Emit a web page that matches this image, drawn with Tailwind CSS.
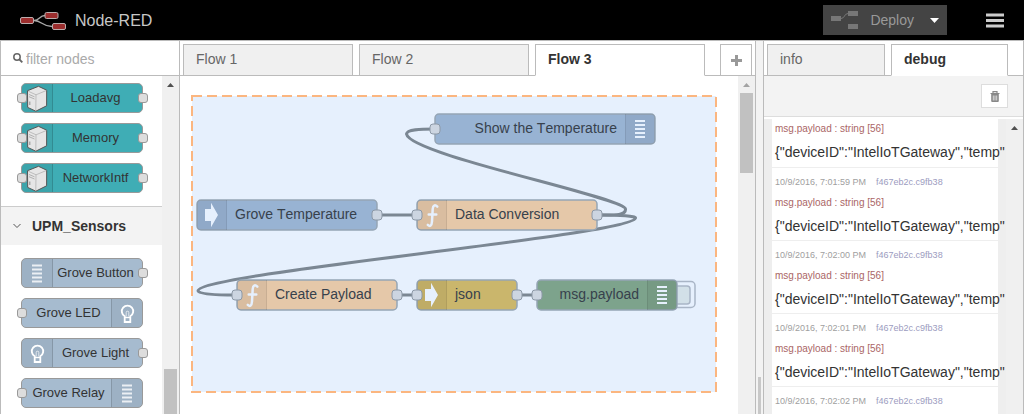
<!DOCTYPE html>
<html lang="en">
<head>
<meta charset="utf-8">
<title>Node-RED</title>
<script src="https://cdn.jsdelivr.net/npm/@tailwindcss/browser@4"></script>
</head>
<body class="flex h-screen flex-col overflow-hidden bg-white font-['Liberation_Sans',Arial,sans-serif] text-sm text-[#333] [font-kerning:none]">

<!-- Shared symbols -->
<svg class="hidden">
  <symbol id="server" viewBox="0 0 30 30">
    <path d="M6.500 7.700 17.500 3.300 25.700 7.200 25.600 22.800 14.800 28.200 6.700 24.400Z" fill="#e6e6e6" stroke="#555" stroke-width="1" stroke-linejoin="round"/>
    <path d="M7.200 8.200 15 11.800 25.200 7.600M15 11.800 14.800 27.500" fill="none" stroke="#aaa" stroke-width=".7"/>
    <path d="M8 11.500l5.500 2.300M8 13.700l5.500 2.300" fill="none" stroke="#999" stroke-width=".7"/>
    <path d="M8.800 18.500v3.500" stroke="#777" stroke-width=".8"/>
  </symbol>
  <symbol id="bars" viewBox="0 0 30 30">
    <path d="M10 7.500h10M10 11.500h10M10 15.500h10M10 19.500h10M10 23.500h10" stroke="currentColor" stroke-width="2"/>
  </symbol>
  <symbol id="bulb" viewBox="0 0 30 30">
    <path d="M12.700 18.200A5.700 5.700 0 1 1 18.300 18.200V24H12.700Z" fill="none" stroke="#fff" stroke-width="1.800"/>
    <path d="M12.500 19.500h6" stroke="#fff" stroke-width="1.400"/>
    <path d="M14.200 18.500v-4a1.300 1.300 0 0 1 2.600 0v4" fill="none" stroke="#fff" stroke-width="1" opacity=".7"/>
  </symbol>
  <symbol id="arrow" viewBox="0 0 30 30">
    <path d="M8 9.500h6V3.200L21 15.500 14 27.800V21.500H8Z" fill="#e6f0fd"/>
  </symbol>
  <symbol id="func" viewBox="0 0 30 30">
    <path d="M20.300 6.700C18 4.300 16 5.200 15.700 9L15 21.500C14.700 25.800 13 27 10.800 24.800M11.700 14.500H19.300" fill="none" stroke="#e6f0fd" stroke-width="2.500" stroke-linecap="round"/>
  </symbol>
</svg>

<header class="flex h-10 shrink-0 items-center bg-black">
  <a href="#" class="ml-5 flex items-center gap-2 pt-px text-base text-[#c7c7c7]">
    <svg class="h-5 w-[47px]" viewBox="0 0 47 20" fill="none">
      <path d="M14 9.500C20 9.500 19 4.500 25 4.500M14 9.500C22 9.500 22 15.500 32 15.500" stroke="#aaa" stroke-width="1.300"/>
      <g fill="#9c2e2e" stroke="#bbadad"><rect x=".5" y="6.500" width="13" height="6" rx="1.500"/><rect x="25" y="1.500" width="13" height="6" rx="1.500"/><rect x="32.500" y="12.500" width="13" height="6" rx="1.500"/></g>
    </svg>
    <span>Node-RED</span>
  </a>
  <button class="ml-auto flex h-[30px] items-center bg-[#444] pr-2 pl-2 text-[#999]">
    <svg class="mr-3 h-[18px] w-[27px]" viewBox="0 0 27 18"><path d="M0 5h10v5H0zM17 0h10v5H17zM17 13h10v5H17z" fill="#777"/><path d="M10 7.500C14 7.500 13 2.500 17 2.500" stroke="#777" fill="none"/></svg>
    Deploy
    <svg class="ml-4 h-[5px] w-[9px]" viewBox="0 0 9 5"><path d="M0 0h9L4.500 5z" fill="#fff"/></svg>
  </button>
  <button aria-label="Menu" class="mr-5 ml-[39px]">
    <svg class="h-[15px] w-[18px]" viewBox="0 0 18 15"><path d="M0 2h18M0 7.500h18M0 13h18" stroke="#ccc" stroke-width="3"/></svg>
  </button>
</header>

<main class="flex min-h-0 flex-1">
  <!-- Palette -->
  <aside class="flex w-[180px] shrink-0 flex-col border-x border-t border-[#bbb]">
    <label class="flex h-[35px] shrink-0 items-center gap-[3px] border-b border-[#bbb] pl-3">
      <svg class="h-[10px] w-[10px] shrink-0" viewBox="0 0 10 10" fill="none" stroke="#666"><circle cx="4" cy="4" r="3.200" stroke-width="1.500"/><path d="M6.500 6.500 9.300 9.300" stroke-width="1.800"/></svg>
      <input type="text" aria-label="filter nodes" placeholder="filter nodes" class="w-full min-w-0 bg-transparent pt-px outline-none placeholder:text-[#aaa]">
    </label>
    <div class="flex min-h-0 flex-1">
      <div class="min-w-0 flex-1 overflow-hidden text-[13px]">
        <ul class="flex flex-col gap-[10px] pt-[7px] pr-[19px] pb-[13px] pl-5">
          <li class="relative flex h-[30px] rounded-[5px] border border-[#999] bg-[#3fadb5]">
            <span class="w-[31px] shrink-0 rounded-l border-r border-black/15 bg-black/5"><svg class="-mt-px -ml-px size-[30px]"><use href="#server"/></svg></span>
            <span class="flex-1 pr-1 text-center leading-7">Loadavg</span>
            <i class="absolute top-[9px] -left-[5px] size-[10px] rounded-[3px] border border-[#999] bg-[#ddd]"></i><i class="absolute top-[9px] -right-[6px] size-[10px] rounded-[3px] border border-[#999] bg-[#ddd]"></i>
          </li>
          <li class="relative flex h-[30px] rounded-[5px] border border-[#999] bg-[#3fadb5]">
            <span class="w-[31px] shrink-0 rounded-l border-r border-black/15 bg-black/5"><svg class="-mt-px -ml-px size-[30px]"><use href="#server"/></svg></span>
            <span class="flex-1 pr-1 text-center leading-7">Memory</span>
            <i class="absolute top-[9px] -left-[5px] size-[10px] rounded-[3px] border border-[#999] bg-[#ddd]"></i><i class="absolute top-[9px] -right-[6px] size-[10px] rounded-[3px] border border-[#999] bg-[#ddd]"></i>
          </li>
          <li class="relative flex h-[30px] rounded-[5px] border border-[#999] bg-[#3fadb5]">
            <span class="w-[31px] shrink-0 rounded-l border-r border-black/15 bg-black/5"><svg class="-mt-px -ml-px size-[30px]"><use href="#server"/></svg></span>
            <span class="flex-1 pr-1 text-center leading-7">NetworkIntf</span>
            <i class="absolute top-[9px] -left-[5px] size-[10px] rounded-[3px] border border-[#999] bg-[#ddd]"></i><i class="absolute top-[9px] -right-[6px] size-[10px] rounded-[3px] border border-[#999] bg-[#ddd]"></i>
          </li>
        </ul>
        <button class="flex h-[39px] w-full items-center gap-[11px] border-t border-[#ccc] bg-[#f3f3f3] pl-3 text-sm font-bold">
          <svg class="h-[6px] w-2" viewBox="0 0 8 6"><path d="M.5 1 4 4.500 7.500 1" fill="none" stroke="#555"/></svg>
          UPM_Sensors
        </button>
        <ul class="flex flex-col gap-[10px] pt-[13px] pr-[19px] pl-5">
          <li class="relative flex h-[30px] rounded-[5px] border border-[#999] bg-[#a6bbcf]">
            <span class="w-[31px] shrink-0 rounded-l border-r border-black/15 bg-black/5 text-white/80"><svg class="-mt-px size-[30px]"><use href="#bars"/></svg></span>
            <span class="flex-1 pr-1 text-center leading-7 whitespace-nowrap">Grove Button</span>
            <i class="absolute top-[9px] -right-[6px] size-[10px] rounded-[3px] border border-[#999] bg-[#ddd]"></i>
          </li>
          <li class="relative flex h-[30px] rounded-[5px] border border-[#999] bg-[#a6bbcf]">
            <span class="flex-1 pl-1 text-center leading-7 whitespace-nowrap">Grove LED</span>
            <span class="w-[31px] shrink-0 rounded-r border-l border-black/15 bg-black/5"><svg class="-mt-px size-[30px]"><use href="#bulb"/></svg></span>
            <i class="absolute top-[9px] -left-[5px] size-[10px] rounded-[3px] border border-[#999] bg-[#ddd]"></i>
          </li>
          <li class="relative flex h-[30px] rounded-[5px] border border-[#999] bg-[#a6bbcf]">
            <span class="w-[31px] shrink-0 rounded-l border-r border-black/15 bg-black/5"><svg class="-mt-px size-[30px]"><use href="#bulb"/></svg></span>
            <span class="flex-1 pr-1 text-center leading-7 whitespace-nowrap">Grove Light</span>
            <i class="absolute top-[9px] -right-[6px] size-[10px] rounded-[3px] border border-[#999] bg-[#ddd]"></i>
          </li>
          <li class="relative flex h-[30px] rounded-[5px] border border-[#999] bg-[#a6bbcf]">
            <span class="flex-1 pl-1 text-center leading-7 whitespace-nowrap">Grove Relay</span>
            <span class="w-[31px] shrink-0 rounded-r border-l border-black/15 bg-black/5 text-white/80"><svg class="-mt-px size-[30px]"><use href="#bars"/></svg></span>
            <i class="absolute top-[9px] -left-[5px] size-[10px] rounded-[3px] border border-[#999] bg-[#ddd]"></i>
          </li>
        </ul>
      </div>
      <div class="flex w-[17px] shrink-0 flex-col items-center bg-[#f0f0f0]">
        <svg class="mt-[7px] h-1 w-[7px] shrink-0" viewBox="0 0 7 4"><path d="M0 4 3.500 0 7 4z" fill="#505050"/></svg>
        <div class="mt-auto h-[45px] w-[13px] bg-[#c1c1c1]"></div>
      </div>
    </div>
  </aside>

  <!-- Workspace -->
  <section class="flex min-w-0 flex-1 flex-col border-t border-r border-[#bbb]">
    <nav class="flex h-[35px] shrink-0 items-end gap-[6px] border-b border-[#bbb] pr-[3px] pl-[3px]">
      <a href="#" class="-mb-px h-8 w-[170px] border border-[#bbb] bg-[#f0f0f0] pl-3 leading-[29px] text-[#666]">Flow 1</a>
      <a href="#" class="-mb-px h-8 w-[170px] border border-[#bbb] bg-[#f0f0f0] pl-3 leading-[29px] text-[#666]">Flow 2</a>
      <a href="#" class="-mb-px h-8 w-[170px] border border-[#bbb] border-b-white bg-white pl-3 leading-[29px] font-bold">Flow 3</a>
      <button aria-label="Add flow" class="-mb-px ml-auto flex h-8 w-8 items-center justify-center border border-[#bbb] bg-white">
        <svg class="mt-px h-[11px] w-[11px]" viewBox="0 0 11 11"><path d="M4 0h3v4h4v3H7v4H4V7H0V4h4z" fill="#999"/></svg>
      </button>
    </nav>
    <div class="flex min-h-0 flex-1">
      <div class="min-w-0 flex-1 overflow-hidden">
        <svg class="h-[338px] w-[558px] text-[#e6f0fd]" viewBox="180 76 558 338" font-size="14">
          <rect x="192" y="96" width="524" height="296" fill="#e6f0fd"/>
          <rect x="192" y="96" width="524" height="296" fill="none" stroke="#fbb680" stroke-width="2" stroke-dasharray="10 5"/>
          <g fill="none" stroke="#7b8793" stroke-width="3">
            <path d="M600 215C612 215 626 216 625.500 209C624 197 410 155 406.500 134C407 129 420 129 435 129"/>
            <path d="M600 215C620 215 636 216 635.500 218C634 235 198 273 198 291C198 294 215 295 237 295"/>
            <path d="M377 215H417M397 295H417M517 295H537"/>
          </g>
          <g stroke="#a9b5c6" stroke-width="1.500" fill="#e6f0fd">
            <rect x="665" y="281.500" width="30" height="26" rx="4"/><rect x="665" y="286" width="25" height="18" rx="3" fill="#d2e0e8"/>
          </g>
          <g stroke="#95a5b5" stroke-width="1.500">
            <rect x="435" y="114" width="220" height="30" rx="4" fill="#98b3d3"/>
            <rect x="197" y="200" width="180" height="30" rx="4" fill="#98b3d3"/>
            <rect x="417" y="200" width="180" height="30" rx="4" fill="#e5c8a9"/>
            <rect x="237" y="280" width="160" height="30" rx="4" fill="#e5c8a9"/>
            <rect x="417" y="280" width="100" height="30" rx="4" fill="#cab66c"/>
            <rect x="537" y="280" width="140" height="30" rx="4" fill="#7da38c"/>
          </g>
          <g fill="#000" fill-opacity=".05">
            <path d="M625 114h26q4 0 4 4v22q0 4-4 4H625zM227 200h-26q-4 0-4 4v22q0 4 4 4h26zM447 200h-26q-4 0-4 4v22q0 4 4 4h26zM267 280h-26q-4 0-4 4v22q0 4 4 4h26zM447 280h-26q-4 0-4 4v22q0 4 4 4h26zM647 280h26q4 0 4 4v22q0 4-4 4H647z"/>
            <path d="M625.500 114v30M226.500 200v30M446.500 200v30M266.500 280v30M446.500 280v30M647.500 280v30" stroke="#000" stroke-opacity=".08"/>
          </g>
          <use href="#bars" x="625" y="113.500" width="30" height="30"/>
          <use href="#bars" x="647" y="279.500" width="30" height="30"/>
          <use href="#arrow" x="197" y="199.500" width="30" height="30"/>
          <use href="#arrow" x="417" y="279.500" width="30" height="30"/>
          <use href="#func" x="417" y="200" width="30" height="30"/>
          <use href="#func" x="237" y="280" width="30" height="30"/>
          <g fill="#ccd5e1" stroke="#8c98a6">
            <rect x="430" y="124" width="10" height="10" rx="3"/>
            <rect x="372" y="210" width="10" height="10" rx="3"/>
            <rect x="412" y="210" width="10" height="10" rx="3"/>
            <rect x="592" y="210" width="10" height="10" rx="3"/>
            <rect x="232" y="290" width="10" height="10" rx="3"/>
            <rect x="392" y="290" width="10" height="10" rx="3"/>
            <rect x="412" y="290" width="10" height="10" rx="3"/>
            <rect x="512" y="290" width="10" height="10" rx="3"/>
            <rect x="532" y="290" width="10" height="10" rx="3"/>
          </g>
          <g fill="#37414c">
            <text x="617" y="133" text-anchor="end">Show the Temperature</text>
            <text x="235" y="219">Grove Temperature</text>
            <text x="455" y="219">Data Conversion</text>
            <text x="275" y="299">Create Payload</text>
            <text x="455" y="299">json</text>
            <text x="639" y="299" text-anchor="end">msg.payload</text>
          </g>
        </svg>
      </div>
      <div class="flex w-[17px] shrink-0 flex-col items-center bg-[#f0f0f0]">
        <svg class="mt-[7px] h-1 w-[7px] shrink-0" viewBox="0 0 7 4"><path d="M0 4 3.500 0 7 4z" fill="#a3a3a3"/></svg>
        <div class="mt-[6px] h-20 w-[13px] bg-[#c1c1c1]"></div>
      </div>
    </div>
  </section>

  <div class="flex w-[7px] shrink-0 items-end justify-center border-t border-[#bbb] bg-[#f3f3f3]"><div class="h-[37px] w-[3px] bg-[#c8c8c8]"></div></div>

  <!-- Sidebar -->
  <aside class="flex w-[261px] shrink-0 flex-col border-x border-t border-[#bbb]">
    <nav class="flex h-[35px] shrink-0 items-end gap-[6px] border-b border-[#bbb] pl-[3px]">
      <a href="#" class="-mb-px h-8 w-[118px] border border-[#bbb] bg-[#f0f0f0] pl-3 leading-[29px] text-[#666]">info</a>
      <a href="#" class="-mb-px h-8 w-[117px] border border-[#bbb] border-b-white bg-white pl-3 leading-[29px] font-bold">debug</a>
    </nav>
    <div class="flex h-[41px] shrink-0 items-center justify-end border-b border-[#ddd] bg-[#f3f3f3] pr-[15px]">
      <button aria-label="Clear messages" class="flex h-6 w-[27px] items-center justify-center border border-[#ddd] bg-white">
        <svg class="h-[11px] w-[10px]" viewBox="0 0 10 11"><path d="M.5 2.500h9M3 2V.7h4V2" fill="none" stroke="#888" stroke-width="1.200"/><path d="M1.200 3h7.600v7q0 1-1 1H2.200q-1 0-1-1z" fill="#888"/><path d="M3.300 4.500v5M5 4.500v5M6.700 4.500v5" stroke="#eee" stroke-width=".8"/></svg>
      </button>
    </div>
    <div class="mt-[2px] flex min-h-0 flex-1 bg-[#eee]">
      <ul class="min-w-0 flex-1 overflow-hidden pl-2">
        <li class="mr-2 h-[49px] border-b border-[#eee] bg-white pt-1 pl-[3px] leading-3 whitespace-nowrap">
          <p class="text-[10px] text-[#a66]">msg.payload : string [56]</p>
          <p class="mt-[7px] text-sm leading-5">{"deviceID":"IntelIoTGateway","temp"</p>
        </li>
        <li class="mr-2 h-[73px] border-b border-[#eee] bg-white pt-2 pl-[3px] text-[9px] leading-3 whitespace-nowrap">
          <p class="flex gap-[10px] text-[#a0a0a0]"><span>10/9/2016, 7:01:59 PM</span><a href="#" class="text-[#9c9cc0]">f467eb2c.c9fb38</a></p>
          <p class="mt-[9px] text-[10px] text-[#a66]">msg.payload : string [56]</p>
          <p class="mt-[7px] text-sm leading-5">{"deviceID":"IntelIoTGateway","temp"</p>
        </li>
        <li class="mr-2 h-[73px] border-b border-[#eee] bg-white pt-2 pl-[3px] text-[9px] leading-3 whitespace-nowrap">
          <p class="flex gap-[10px] text-[#a0a0a0]"><span>10/9/2016, 7:02:00 PM</span><a href="#" class="text-[#9c9cc0]">f467eb2c.c9fb38</a></p>
          <p class="mt-[9px] text-[10px] text-[#a66]">msg.payload : string [56]</p>
          <p class="mt-[7px] text-sm leading-5">{"deviceID":"IntelIoTGateway","temp"</p>
        </li>
        <li class="mr-2 h-[73px] border-b border-[#eee] bg-white pt-2 pl-[3px] text-[9px] leading-3 whitespace-nowrap">
          <p class="flex gap-[10px] text-[#a0a0a0]"><span>10/9/2016, 7:02:01 PM</span><a href="#" class="text-[#9c9cc0]">f467eb2c.c9fb38</a></p>
          <p class="mt-[9px] text-[10px] text-[#a66]">msg.payload : string [56]</p>
          <p class="mt-[7px] text-sm leading-5">{"deviceID":"IntelIoTGateway","temp"</p>
        </li>
        <li class="mr-2 h-[73px] border-b border-[#eee] bg-white pt-2 pl-[3px] text-[9px] leading-3 whitespace-nowrap">
          <p class="flex gap-[10px] text-[#a0a0a0]"><span>10/9/2016, 7:02:02 PM</span><a href="#" class="text-[#9c9cc0]">f467eb2c.c9fb38</a></p>
        </li>
      </ul>
      <div class="flex w-[17px] shrink-0 justify-center bg-[#f0f0f0]">
        <svg class="mt-[7px] h-1 w-[7px]" viewBox="0 0 7 4"><path d="M0 4 3.500 0 7 4z" fill="#505050"/></svg>
      </div>
    </div>
  </aside>
</main>
</body>
</html>
